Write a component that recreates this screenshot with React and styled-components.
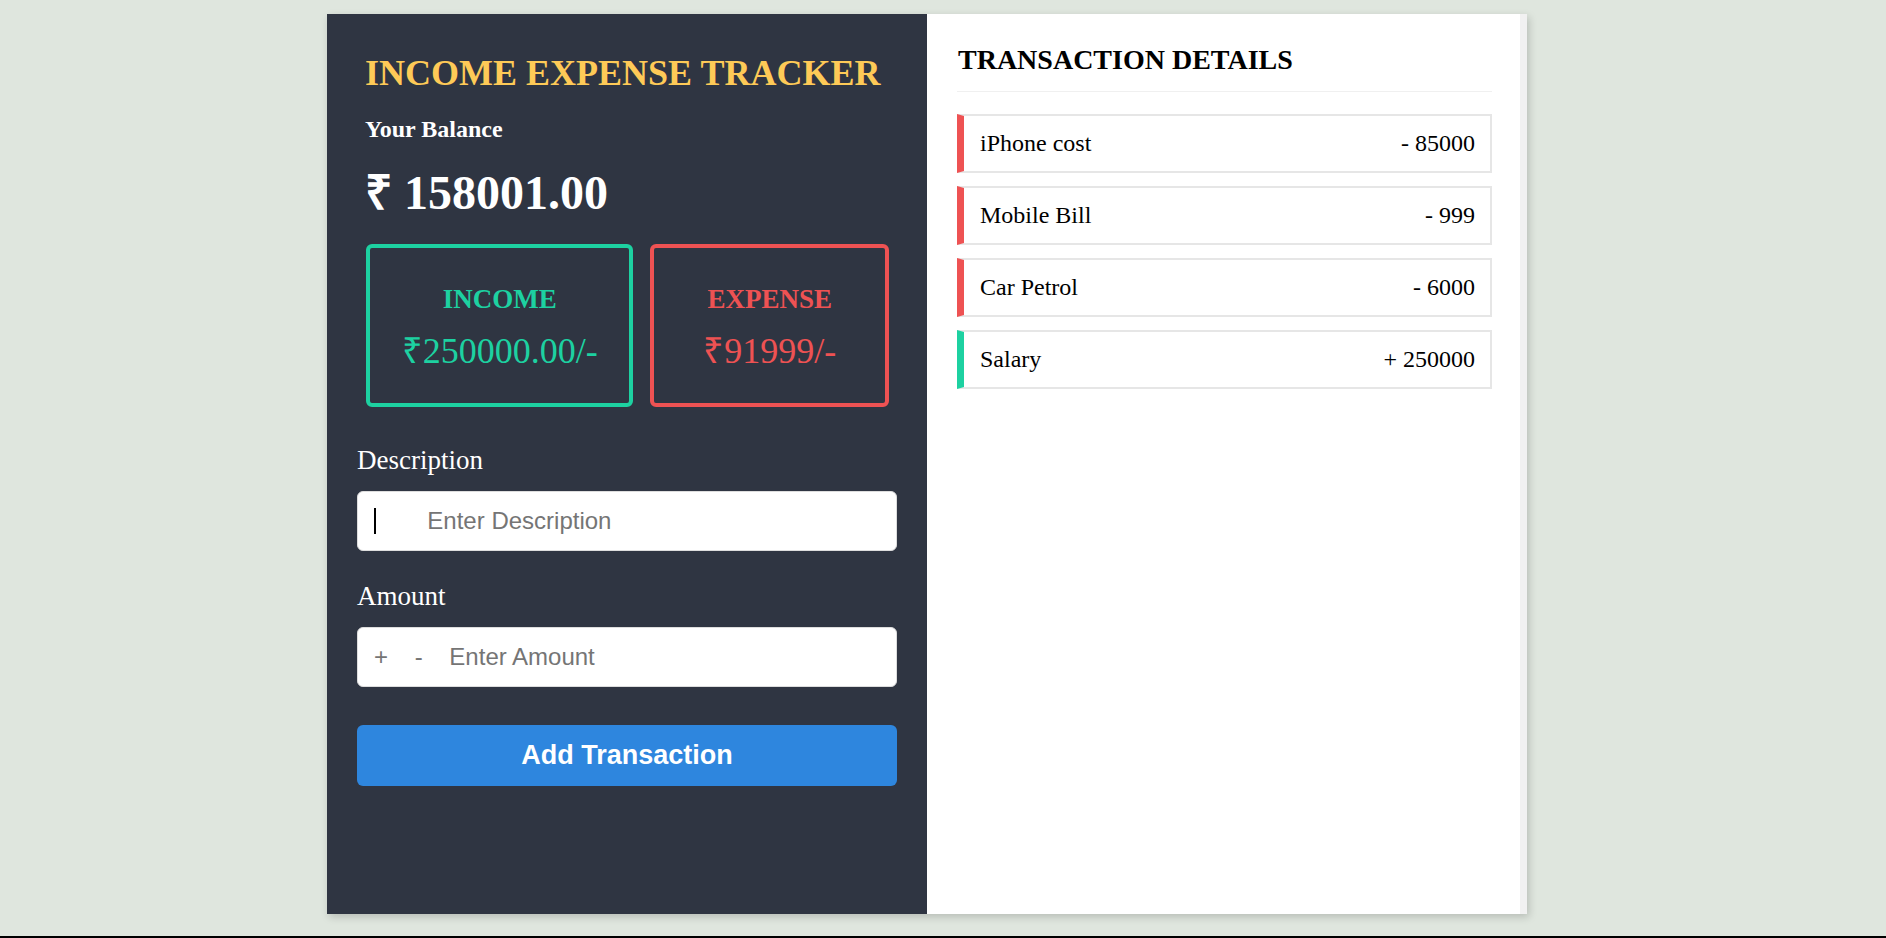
import React from "react";
import styled, { createGlobalStyle } from "styled-components";

const GlobalStyle = createGlobalStyle`
  body {
    margin: 0;
    background-color: #dfe6de;
    font-family: "Liberation Serif", "Times New Roman", serif;
  }
`;

const Page = styled.div`
  min-height: 100vh;
  box-sizing: border-box;
  display: flex;
  justify-content: center;
  align-items: flex-start;
  padding: 14px 32px 0 0;
  border-bottom: 2px solid #000;
`;

const Tracker = styled.div`
  display: grid;
  grid-template-columns: 600px 600px;
  height: 900px;
  box-shadow: 2px 3px 8px rgba(0, 0, 0, 0.18);
`;

const LeftPanel = styled.div`
  background-color: #2f3542;
  padding: 0 30px;
  box-sizing: border-box;
`;

const Header = styled.div`
  padding: 39px 8px 0;
`;

const Title = styled.h1`
  margin: 0;
  font-size: 36px;
  line-height: 40px;
  font-weight: bold;
  color: #feca57;
  white-space: nowrap;
`;

const BalanceLabel = styled.h3`
  margin: 22px 0 0;
  font-size: 24px;
  line-height: 28px;
  font-weight: bold;
  color: #fff;
`;

const BalanceValue = styled.h2`
  margin: 23px 0 0;
  font-size: 48px;
  line-height: 54px;
  font-weight: bold;
  color: #fff;
`;

const Cards = styled.div`
  display: flex;
  gap: 17px;
  margin-top: 24px;
  padding-left: 1px;
`;

const Card = styled.div`
  width: ${(p) => p.$width}px;
  height: 163px;
  box-sizing: border-box;
  border: 4px solid ${(p) => p.$color};
  border-radius: 6px;
  padding-top: 35px;
  text-align: center;
  color: ${(p) => p.$color};
`;

const CardTitle = styled.h3`
  margin: 0;
  font-size: 27px;
  line-height: 32px;
  font-weight: bold;
`;

const CardAmount = styled.p`
  margin: 15px 0 0;
  font-size: 36px;
  line-height: 42px;
  white-space: nowrap;
`;

const Form = styled.form`
  margin-top: 37px;
`;

const Label = styled.label`
  display: block;
  font-size: 27px;
  line-height: 32px;
  color: #fff;
  margin: ${(p) => (p.$first ? "0" : "29px")} 0 15px;
`;

const Field = styled.div`
  position: relative;
  height: 60px;
`;

const Caret = styled.span`
  position: absolute;
  left: 17px;
  top: 17px;
  width: 2px;
  height: 26px;
  background-color: #000;
  pointer-events: none;
`;

const Input = styled.input`
  width: 100%;
  height: 60px;
  box-sizing: border-box;
  border: 1px solid #ddd;
  border-radius: 6px;
  padding: 0 16px;
  font-family: "Liberation Sans", Arial, sans-serif;
  font-size: 24px;
  color: #222;
  background-color: #fff;
  outline: none;
  &::placeholder {
    color: #757575;
    white-space: pre;
  }
`;

const AddButton = styled.button`
  display: block;
  width: 100%;
  height: 61px;
  margin-top: 38px;
  border: none;
  border-radius: 6px;
  background-color: #2e86de;
  color: #fff;
  font-family: "Liberation Sans", Arial, sans-serif;
  font-size: 27px;
  font-weight: bold;
  cursor: pointer;
`;

const RightPanel = styled.div`
  background-color: #fff;
  border-right: 7px solid #f1f1f1;
  padding: 0 28px 0 30px;
  box-sizing: border-box;
`;

const DetailsTitle = styled.h2`
  margin: 0 0 22px;
  padding: 30px 0 15px 1px;
  font-size: 28px;
  line-height: 32px;
  font-weight: bold;
  color: #000;
  border-bottom: 1px solid #f0f0f0;
`;

const List = styled.ul`
  list-style: none;
  margin: 0;
  padding: 0;
  display: flex;
  flex-direction: column;
  gap: 13px;
`;

const Row = styled.li`
  height: 59px;
  box-sizing: border-box;
  display: flex;
  justify-content: space-between;
  align-items: center;
  border: 2px solid #e6e6e6;
  border-left: 7px solid ${(p) => p.$color};
  padding: 0 15px 0 16px;
  font-size: 24px;
  color: #000;
`;

const GREEN = "#1dd1a1";
const RED = "#ee5253";

const transactions = [
  { id: 1, text: "iPhone cost", amount: -85000 },
  { id: 2, text: "Mobile Bill", amount: -999 },
  { id: 3, text: "Car Petrol", amount: -6000 },
  { id: 4, text: "Salary", amount: 250000 },
];

export default function App() {
  return (
    <>
      <GlobalStyle />
      <Page>
        <Tracker>
          <LeftPanel>
            <Header>
              <Title>INCOME EXPENSE TRACKER</Title>
              <BalanceLabel>Your Balance</BalanceLabel>
              <BalanceValue>₹ 158001.00</BalanceValue>
              <Cards>
                <Card $width={269} $color={GREEN}>
                  <CardTitle>INCOME</CardTitle>
                  <CardAmount>₹250000.00/-</CardAmount>
                </Card>
                <Card $width={240} $color={RED}>
                  <CardTitle>EXPENSE</CardTitle>
                  <CardAmount>₹91999/-</CardAmount>
                </Card>
              </Cards>
            </Header>
            <Form onSubmit={(e) => e.preventDefault()}>
              <Label $first htmlFor="desc">Description</Label>
              <Field>
                <Input id="desc" type="text" placeholder="        Enter Description" />
                <Caret />
              </Field>
              <Label htmlFor="amount">Amount</Label>
              <Field>
                <Input id="amount" type="text" placeholder="+    -    Enter Amount" />
              </Field>
              <AddButton type="submit">Add Transaction</AddButton>
            </Form>
          </LeftPanel>
          <RightPanel>
            <DetailsTitle>TRANSACTION DETAILS</DetailsTitle>
            <List>
              {transactions.map((t) => (
                <Row key={t.id} $color={t.amount < 0 ? RED : GREEN}>
                  <span>{t.text}</span>
                  <span>
                    {t.amount < 0 ? "-" : "+"} {Math.abs(t.amount)}
                  </span>
                </Row>
              ))}
            </List>
          </RightPanel>
        </Tracker>
      </Page>
    </>
  );
}
